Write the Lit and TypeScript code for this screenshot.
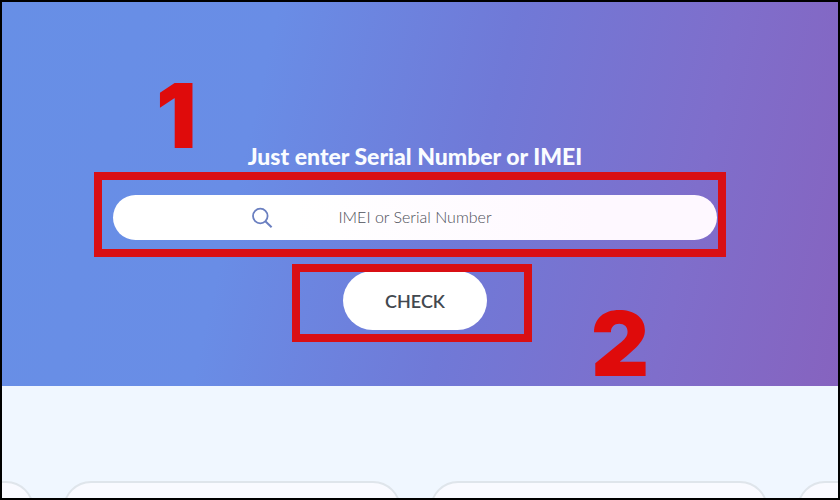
import { LitElement, html, css } from "lit";
import { customElement } from "lit/decorators.js";

@customElement("serial-form")
export class SerialForm extends LitElement {
  static styles = css`
    :host {
      display: block;
      width: 100%;
      max-width: 604px;
    }
    .form {
      display: flex;
      flex-direction: column;
      align-items: center;
      margin: 0;
    }
    .title {
      margin: 0 0 24px;
      font-size: 23px;
      line-height: 30px;
      font-weight: 900;
      color: #fafcff;
    }
    .field {
      position: relative;
      display: grid;
      align-items: center;
      width: 100%;
      height: 45px;
      margin-bottom: 31px;
    }
    .input {
      grid-area: 1 / 1;
      box-sizing: border-box;
      width: 100%;
      height: 100%;
      padding: 0 24px 2px;
      border: 0;
      border-radius: 23px;
      background: linear-gradient(90deg, #ffffff 30%, #fef8ff 80%);
      font: 300 16px/24px Lato, "Liberation Sans", sans-serif;
      text-align: center;
      color: #4c4f58;
    }
    .input::placeholder {
      color: #4c4f58;
      opacity: 1;
    }
    .icon {
      grid-area: 1 / 1;
      z-index: 1;
      width: 22px;
      height: 22px;
      margin-left: 23%;
      pointer-events: none;
    }
    .action {
      position: relative;
    }
    .button {
      display: block;
      width: 144px;
      height: 59px;
      padding: 0;
      border: 0;
      border-radius: 30px;
      background: #ffffff;
      font: 600 18px/24px Lato, "Liberation Sans", sans-serif;
      color: #42484f;
    }
    .mark {
      position: absolute;
      border: 8px solid #d90f14;
      pointer-events: none;
    }
    .mark-field {
      inset: -23px -9px -17px -19px;
    }
    .mark-action {
      inset: -7px -45px -12px -51px;
    }
    .step {
      position: absolute;
      font: 900 90px/90px Inter, "Liberation Sans", sans-serif;
      color: #df0b0b;
      pointer-events: none;
    }
    .step-one {
      left: 43px;
      bottom: 79px;
    }
    .step-two {
      left: 248px;
      top: 28px;
    }
  `;

  render() {
    return html`
      <form class="form" @submit=${(e: Event) => e.preventDefault()}>
        <h1 class="title">
          <label for="serial">Just enter Serial Number or IMEI</label>
        </h1>
        <div class="field">
          <input class="input" id="serial" type="text" placeholder="IMEI or Serial Number" />
          <svg class="icon" viewBox="0 0 22 22" fill="none" stroke="#6a7fc0" aria-hidden="true">
            <circle cx="8.3" cy="9" r="7.3" stroke-width="1.8" />
            <path d="M13.6 14.5 L19.6 20.3" stroke-width="2" />
          </svg>
          <div class="mark mark-field"></div>
          <span class="step step-one">1</span>
        </div>
        <div class="action">
          <button class="button" type="submit">CHECK</button>
          <div class="mark mark-action"></div>
          <span class="step step-two">2</span>
        </div>
      </form>
    `;
  }
}

@customElement("app-root")
export class AppRoot extends LitElement {
  static styles = css`
    :host {
      display: block;
      font-family: Lato, "Liberation Sans", sans-serif;
    }
    .frame {
      box-sizing: border-box;
      display: flex;
      flex-direction: column;
      height: 100vh;
      border: 2px solid #000000;
      background: #f0f7ff;
      overflow: hidden;
    }
    .hero {
      display: flex;
      justify-content: center;
      padding: 139px 10px 56px 0;
      background: linear-gradient(103deg, #678fe6 0%, #698de6 30%, #7079d7 56%, #7f6ecb 80%, #8663bf 100%);
    }
    .cards {
      flex: 1 1 0;
      min-height: 0;
      display: grid;
      grid-template-columns: repeat(4, 338px);
      justify-content: center;
      gap: 29px;
      padding: 95px 10px 0 0;
      overflow: hidden;
    }
    .card {
      box-sizing: border-box;
      height: 240px;
      border: 2px solid #dfe5eb;
      border-radius: 28px;
      background: #f9faff;
    }
  `;

  render() {
    return html`
      <div class="frame">
        <header class="hero"><serial-form></serial-form></header>
        <main class="cards">
          ${[0, 1, 2, 3].map(() => html`<article class="card"></article>`)}
        </main>
      </div>
    `;
  }
}
